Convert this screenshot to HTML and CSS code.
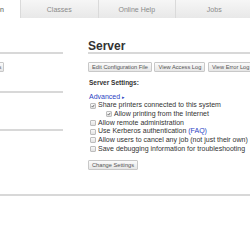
FILE: index.html
```html
<!DOCTYPE html>
<html lang="en">
<head>
    <meta charset="UTF-8">
    <title>Administration - CUPS</title>
    <link rel="stylesheet" href="styles.css">
</head>
<body>
    <div class="page">
        <div class="tabs">
            <a class="tab" href="#">Home</a>
            <a class="tab active" href="#">Administration</a>
            <a class="tab" href="#">Classes</a>
            <a class="tab" href="#">Online Help</a>
            <a class="tab" href="#">Jobs</a>
            <a class="tab" href="#">Printers</a>
        </div>

        <div class="content">
            <div class="columns">
                <div class="col side">
                    <h2 class="title">Printers</h2>
                    <div class="btns">
                        <button class="btn">Add Printer</button>
                        <button class="btn">Find New Printers</button>
                        <button class="btn">Manage Printers</button>
                    </div>

                    <h2 class="title">Classes</h2>
                    <div class="btns">
                        <button class="btn">Add Class</button>
                        <button class="btn">Manage Classes</button>
                    </div>

                    <h2 class="title">Jobs</h2>
                    <div class="btns">
                        <button class="btn">Manage Jobs</button>
                    </div>
                </div>

                <div class="col">
                    <h2 class="title">Server</h2>
                    <div class="btns">
                        <button class="btn">Edit Configuration File</button>
                        <button class="btn">View Access Log</button>
                        <button class="btn">View Error Log</button>
                        <button class="btn">View Page Log</button>
                    </div>

                    <p class="settings-title">Server Settings:</p>

                    <div class="settings">
                        <a class="link" href="#">Advanced <span class="arrow">&#9656;</span></a>
                        <label class="opt"><input type="checkbox" checked><span>Share printers connected to this system</span></label>
                        <label class="opt sub"><input type="checkbox" checked><span>Allow printing from the Internet</span></label>
                        <label class="opt"><input type="checkbox"><span>Allow remote administration</span></label>
                        <label class="opt"><input type="checkbox"><span>Use Kerberos authentication <a class="link" href="#">(FAQ)</a></span></label>
                        <label class="opt"><input type="checkbox"><span>Allow users to cancel any job (not just their own)</span></label>
                        <label class="opt"><input type="checkbox"><span>Save debugging information for troubleshooting</span></label>
                    </div>

                    <button class="btn submit">Change Settings</button>
                </div>
            </div>

            <h2 class="title wide">RSS Subscriptions</h2>
        </div>
    </div>
</body>
</html>
```

FILE: styles.css
```css
* {
    margin: 0;
    padding: 0;
    box-sizing: border-box;
}

body {
    font-family: "Liberation Sans", Arial, sans-serif;
    color: #333;
    background: white;
    overflow: hidden;
}

/* the window shows the page scrolled to the right */
.page {
    width: 465px;
    margin-left: -134px;
}

.tabs {
    display: flex;
    height: 18px;
    background: linear-gradient(#f6f6f6, #e8e8e8);
}

.tab {
    flex: 1;
    display: flex;
    align-items: center;
    justify-content: center;
    font-size: 7px;
    color: #8a8a8a;
    text-decoration: none;
    border-right: 1px solid #dadada;
}

.tab.active {
    background: white;
    color: #555;
}

.content {
    padding: 22px 10px 0 0;
}

.columns {
    display: grid;
    grid-template-columns: 197px 1fr;
    gap: 25px;
}

.title {
    font-size: 12px;
    line-height: 12px;
    font-weight: bold;
    color: #333;
    border-bottom: 2px solid #d8d8d8;
}

.col .title + .btns {
    margin-top: 8px;
}

.col .btns + .title {
    margin-top: 6.5px;
}

.btns {
    display: flex;
    gap: 2.5px;
    white-space: nowrap;
}

.btn {
    font-family: inherit;
    font-size: 5.7px;
    line-height: 6px;
    color: #555;
    padding: 1px 3px;
    height: 10px;
    border: 1px solid #c8c8c8;
    border-radius: 1px;
    background: linear-gradient(#fbfbfb, #e6e6e6);
}

.side .btn {
    padding: 1px 2px;
}

.settings-title {
    font-size: 6.5px;
    line-height: 8px;
    font-weight: bold;
    margin: 7px 0 5.5px 1px;
}

.settings {
    display: flex;
    flex-direction: column;
    align-items: flex-start;
    font-size: 7px;
    line-height: 8.67px;
}

.link {
    color: #2b3fc4;
    text-decoration: none;
}

.settings > .link {
    margin-left: 1px;
}

.arrow {
    font-size: 5px;
}

.opt {
    display: flex;
    align-items: center;
    gap: 2px;
    padding-left: 2px;
    white-space: nowrap;
}

.opt.sub {
    padding-left: 18px;
}

.opt input {
    appearance: none;
    width: 6px;
    height: 6px;
    border: 1px solid #bdbdbd;
    border-radius: 1px;
    background: linear-gradient(#f8f8f8, #e2e2e2);
}

.opt input:checked {
    background: url("data:image/svg+xml,%3Csvg xmlns='http://www.w3.org/2000/svg' viewBox='0 0 6 6'%3E%3Cpath d='M1 3.2 L2.4 4.6 L5 1.2' fill='none' stroke='%23444' stroke-width='1.1'/%3E%3C/svg%3E") center / 100% no-repeat, linear-gradient(#f8f8f8, #e2e2e2);
}

.submit {
    margin-top: 7px;
}

.title.wide {
    margin-top: 11px;
}
```
